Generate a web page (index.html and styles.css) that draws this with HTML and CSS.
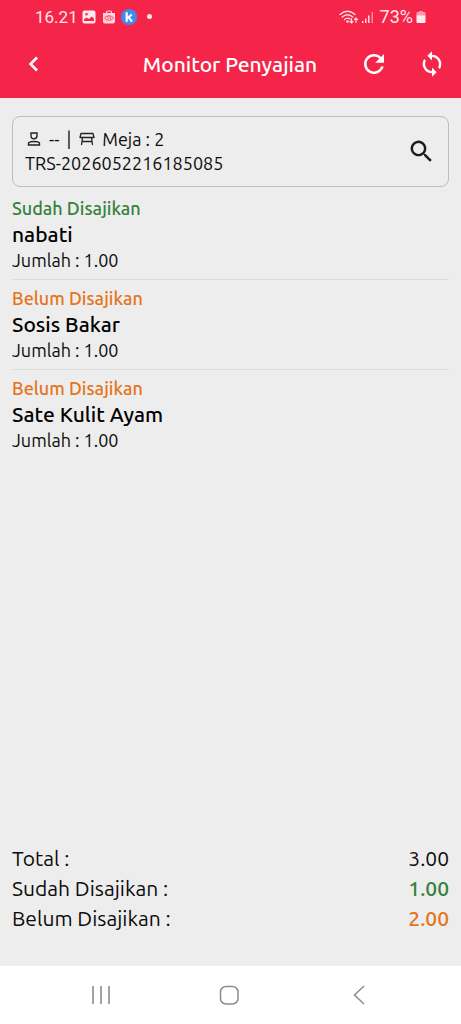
FILE: index.html
```html
<!DOCTYPE html>
<html lang="id">
<head>
<meta charset="utf-8">
<meta name="viewport" content="width=device-width, initial-scale=1">
<title>Monitor Penyajian</title>
<link rel="stylesheet" href="styles.css">
</head>
<body>
<div class="screen">
  <header class="header">
    <div class="status">
      <span class="clock">16.21</span>
      <svg class="s-photo" width="14" height="14" viewBox="0 0 14 14"><path fill="#ffe9ee" fill-rule="evenodd" d="M2.500 0.500h9a2 2 0 0 1 2 2v9a2 2 0 0 1-2 2h-9a2 2 0 0 1-2-2v-9a2 2 0 0 1 2-2zM2 11h10V8.500L9.500 6.500 7 9 4.500 7.500 2 9.500zM4.500 3a1.300 1.300 0 1 0 0 2.600 1.300 1.300 0 0 0 0-2.600z"/></svg>
      <svg class="s-bag" width="14" height="14" viewBox="0 0 14 14"><path fill="none" stroke="#ffd5dd" stroke-width="1.200" d="M4.500 3.500V2.500Q4.500 1 6 1h2q1.500 0 1.500 1.500v1"/><path fill="#ffd5dd" d="M1 3h12v8.500a2 2 0 0 1-2 2H3a2 2 0 0 1-2-2z"/><path fill="none" stroke="#f52549" stroke-width=".8" d="M2.500 7.500Q7 4 11.500 7.500M2.500 8.500q4.500 3.500 9 0M5 6.500l1.500 2.500M7.500 6.500L9 9"/></svg>
      <svg class="s-k" width="16" height="16" viewBox="0 0 16 16"><circle cx="8" cy="8" r="8" fill="#3d8df0"/><path fill="none" stroke="#fff" stroke-width="2.200" d="M5.700 3.200v9.600M10.800 5.500L6.500 9M7.500 8l3.500 4.700"/></svg>
      <span class="dot"></span>
      <span class="grow"></span>
      <svg class="s-net" width="36" height="16" viewBox="0 0 36 16"><g fill="none" stroke="#ffdbe2" stroke-width="1.400" stroke-linecap="round"><path d="M1 5.500Q8.500-1 16 5.500M3.200 8Q8.500 3.300 13.800 8M5.500 10.500Q8.500 8 11 10"/><path d="M12.500 9.500v4.500M11 12.500l1.500 1.500 1.500-1.500M17 13.500V9M15.500 10.500L17 9l1.500 1.500" stroke-width="1.200"/></g><circle cx="8.500" cy="12.500" r="1.300" fill="#ffdbe2"/><path fill="#ffdbe2" d="M23 12h1.500v2H23zM26 9.500h1.500V14H26zM29 6.500h1.500V14H29z"/><path fill="#fb8da1" d="M32.500 3H34v11h-1.500z"/></svg>
      <span class="percent">73%</span>
      <svg class="s-bat" width="10" height="14" viewBox="0 0 10 14"><path fill="#fb9aac" d="M3 1h4v1h1.500Q9.500 2 9.500 3v3h-9V3q0-1 1-1H3z"/><path fill="#ffe9ee" d="M.5 5.500h9V12q0 1-1 1h-7q-1 0-1-1z"/></svg>
    </div>
    <div class="toolbar">
      <button class="tool" aria-label="Kembali"><svg width="24" height="24" viewBox="0 0 24 24"><path fill="none" stroke="#fff" stroke-width="2.600" d="M15 5.500L8.500 12l6.500 6.500"/></svg></button>
      <h1 class="title">Monitor Penyajian</h1>
      <button class="tool" aria-label="Muat ulang"><svg width="30" height="30" viewBox="0 0 24 24"><path fill="#fff" d="M17.650 6.350A8 8 0 1 0 19.730 14h-2.080A6 6 0 1 1 12 6c1.660 0 3.140.69 4.220 1.780L13 11h7V4z"/></svg></button>
      <button class="tool" aria-label="Sinkronkan"><svg width="28" height="28" viewBox="0 0 24 24"><path fill="#fff" d="M12 4V1L8 5l4 4V6a6 6 0 0 1 5.250 8.800l1.460 1.460A8 8 0 0 0 12 4zm0 14a6 6 0 0 1-5.250-8.800L5.290 7.740A8 8 0 0 0 12 20v3l4-4-4-4z"/></svg></button>
    </div>
  </header>
  <main class="content">
    <section class="order">
      <div class="order-text">
        <div class="order-line">
          <svg class="person" width="18" height="18" viewBox="0 0 18 18"><path fill="none" stroke="#222" stroke-width="1.400" d="M6 3h6v2.500a3 3.300 0 0 1-6 0zM3.500 15v-1.500q0-2 5.500-2t5.500 2V15z"/></svg>
          <span>--</span><span class="bar">|</span>
          <svg width="18" height="18" viewBox="0 0 18 18"><path fill="none" stroke="#222" stroke-width="1.300" stroke-linejoin="round" d="M3 3.500h12l1 4H2zM4.500 7.500L3.500 15M13.500 7.500l1 7.500M4 11.500h10"/></svg>
          <span class="table-no">Meja : 2</span>
        </div>
        <div>TRS-2026052216185085</div>
      </div>
      <button class="tool" aria-label="Cari"><svg width="29" height="29" viewBox="0 0 24 24"><path fill="#1c1c1c" d="M15.500 14h-.79l-.28-.27A6.500 6.500 0 1 0 13.730 14.430l.27.280v.79l5 4.990L20.490 19zm-6 0a4.500 4.500 0 1 1 0-9 4.500 4.500 0 0 1 0 9z"/></svg></button>
    </section>
    <ul class="items">
      <li class="item"><div class="state done">Sudah Disajikan</div><h2 class="name">nabati</h2><div>Jumlah : 1.00</div></li>
      <li class="item"><div class="state pending">Belum Disajikan</div><h2 class="name">Sosis Bakar</h2><div>Jumlah : 1.00</div></li>
      <li class="item"><div class="state pending">Belum Disajikan</div><h2 class="name">Sate Kulit Ayam</h2><div>Jumlah : 1.00</div></li>
    </ul>
    <dl class="totals">
      <div class="total"><dt>Total :</dt><dd>3.00</dd></div>
      <div class="total"><dt>Sudah Disajikan :</dt><dd class="strong done">1.00</dd></div>
      <div class="total"><dt>Belum Disajikan :</dt><dd class="strong pending">2.00</dd></div>
    </dl>
  </main>
  <nav class="nav">
    <button class="nav-button" aria-label="Aplikasi terbaru"><svg width="24" height="24" viewBox="0 0 24 24"><path fill="none" stroke="#8c8c8c" stroke-width="1.600" d="M4 3v18M12 3v18M20 3v18"/></svg></button>
    <button class="nav-button" aria-label="Beranda"><svg width="24" height="24" viewBox="0 0 24 24"><rect x="2.500" y="3.500" width="17.500" height="17.500" rx="5.500" fill="none" stroke="#8c8c8c" stroke-width="1.500"/></svg></button>
    <button class="nav-button" aria-label="Kembali"><svg width="24" height="24" viewBox="0 0 24 24"><path fill="none" stroke="#8c8c8c" stroke-width="1.500" d="M16 3l-9.500 9 9.500 9"/></svg></button>
  </nav>
</div>
</body>
</html>
```
FILE: styles.css
```css
* { box-sizing: border-box; }
body {
  margin: 0;
  background: #ededed;
  color: #0c0c0c;
  font-family: Ubuntu, "Noto Sans", sans-serif;
  font-size: 18px;
}
button { border: 0; padding: 0; background: none; }
svg { display: block; flex: none; }
h1, h2, ul, dl, dd { margin: 0; padding: 0; }
.screen { display: flex; flex-direction: column; min-height: 100vh; }
.header { background: #f52549; color: #fff; }
.status {
  display: flex;
  align-items: center;
  height: 34px;
  padding: 0 35px 1px;
  color: #ffe3e8;
  font-family: Roboto, sans-serif;
  font-size: 17px;
}
.s-photo { margin-left: 4px; }
.s-bag { margin-left: 6px; }
.s-k { margin-left: 5px; }
.dot { width: 5px; height: 5px; margin-left: 10px; border-radius: 50%; background: #ffe9ee; }
.grow { flex: 1; }
.percent { margin-left: 5px; font-size: 18px; }
.s-bat { margin-left: 3px; }
.toolbar {
  display: flex;
  align-items: center;
  height: 64px;
  padding: 0 14px 4px 19px;
}
.tool { display: grid; place-items: center; flex: none; width: 30px; height: 30px; }
.title {
  flex: 1;
  padding-left: 52px;
  text-align: center;
  font-size: 21px;
  font-weight: 500;
  line-height: 28px;
}
.toolbar .tool + .tool { margin-left: 28px; }
.content { display: flex; flex: 1; flex-direction: column; padding: 18px 12px 33px; }
.order {
  display: flex;
  align-items: center;
  justify-content: space-between;
  padding: 10px 12px 11px;
  border: 1px solid #bdbdbd;
  border-radius: 8px;
  line-height: 24px;
}
.order-line { display: flex; align-items: center; }
.person { margin-right: 6px; }
.bar { margin: 0 7px; }
.table-no { margin-left: 6px; }
.items { flex: 1; padding-top: 3px; list-style: none; }
.item { padding: 5px 0 6px; line-height: 26px; }
.item:not(:last-child) { border-bottom: 1px solid #dcdcdc; }
.state { font-size: 18px; font-weight: 500; }
.name { color: #000; font-size: 21px; font-weight: 500; line-height: 26px; }
.done { color: #34813a; }
.pending { color: #e6731a; }
.total { display: flex; justify-content: space-between; font-size: 21px; line-height: 30px; }
.strong { font-weight: 500; }
.nav {
  display: grid;
  grid-template-columns: repeat(3, 1fr);
  height: 58px;
  padding: 0 36px;
  background: #fff;
}
.nav-button { display: grid; place-items: center; }
```
